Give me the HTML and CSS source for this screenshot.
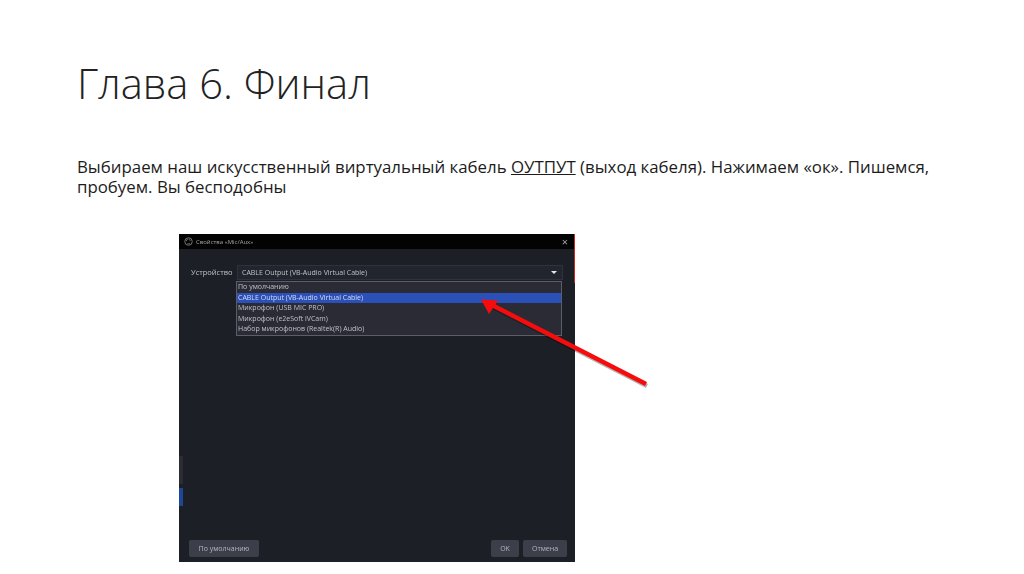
FILE: index.html
```html
<!DOCTYPE html>
<html lang="ru">
<head>
    <meta charset="UTF-8">
    <title>Глава 6. Финал</title>
    <link rel="stylesheet" href="styles.css">
</head>
<body>
    <div class="slide">
        <h1 class="slide-title">Глава 6. Финал</h1>
        <p class="slide-text">Выбираем наш искусственный виртуальный кабель <u>ОУТПУТ</u> (выход кабеля). Нажимаем «ок». Пишемся, пробуем. Вы бесподобны</p>

        <!-- Dialog screenshot -->
        <div class="dialog">
            <div class="dialog-bar">
                <svg class="bar-logo" viewBox="0 0 12 12" width="9" height="9">
                    <circle cx="6" cy="6" r="5" fill="none" stroke="#a5a5a5" stroke-width="0.9"/>
                    <path d="M6 2.5a2 2 0 0 1 1.8 3M8 8a2 2 0 0 1-3.6 0M3.2 5.6a2 2 0 0 1 2-2.4" fill="none" stroke="#a5a5a5" stroke-width="0.8"/>
                </svg>
                <span class="bar-title">Свойства «Mic/Aux»</span>
                <span class="bar-close">×</span>
            </div>
            <div class="dialog-body">
                <div class="device-row">
                    <span class="device-label">Устройство</span>
                    <div class="device-select">
                        <div class="combo">
                            <span>CABLE Output (VB-Audio Virtual Cable)</span>
                            <span class="combo-arrow"></span>
                        </div>
                        <div class="combo-list">
                            <div class="combo-item">По умолчанию</div>
                            <div class="combo-item selected">CABLE Output (VB-Audio Virtual Cable)</div>
                            <div class="combo-item">Микрофон (USB MIC PRO)</div>
                            <div class="combo-item">Микрофон (e2eSoft iVCam)</div>
                            <div class="combo-item">Набор микрофонов (Realtek(R) Audio)</div>
                        </div>
                    </div>
                </div>
                <div class="dialog-footer">
                    <div class="btn btn-default">По умолчанию</div>
                    <div class="footer-right">
                        <div class="btn btn-ok">OK</div>
                        <div class="btn btn-cancel">Отмена</div>
                    </div>
                </div>
            </div>
            <div class="edge-red"></div>
            <div class="edge-grey"></div>
            <div class="edge-blue"></div>
        </div>

        <!-- Red arrow over the screenshot -->
        <svg class="arrow" viewBox="0 0 1024 574" width="1024" height="574">
            <path d="M646 384 L490 304" stroke="#000" stroke-opacity="0.3" stroke-width="4.5" transform="translate(1 2)"/>
            <path d="M646 384 L490 304" stroke="#f50d0d" stroke-width="4.5"/>
            <path d="M481 299.500 L498 300.500 L489 314 Z" fill="#f50d0d"/>
        </svg>
    </div>
</body>
</html>
```

FILE: styles.css
```css
body {
    margin: 0;
    background: #fff;
    font-family: "Open Sans", "Noto Sans", sans-serif;
    color: #1c1c1c;
}

.slide {
    position: relative;
    width: 1024px;
    height: 574px;
    padding: 57px 0 0 77px;
    box-sizing: border-box;
    overflow: hidden;
}

/* Title and text */
.slide-title {
    margin: 0;
    font-size: 41.700px;
    line-height: 52px;
    font-weight: 300;
    color: #222;
}

.slide-text {
    margin: 48px 0 0;
    width: 870px;
    font-size: 16.840px;
    line-height: 20px;
}

/* Dialog screenshot */
.dialog {
    position: relative;
    display: flex;
    flex-direction: column;
    width: 396px;
    height: 328px;
    margin: 37px 0 0 102px;
    background: #1c1f26;
    color: #bfc1c7;
    font-size: 7px;
    filter: blur(0.5px);
}

.dialog-bar {
    display: flex;
    align-items: center;
    gap: 3px;
    height: 15px;
    flex-shrink: 0;
    padding: 0 7px 0 5px;
    background: #030303;
}

.bar-title {
    font-size: 6px;
    color: #a5a5a5;
}

.bar-close {
    margin-left: auto;
    font-size: 11px;
    line-height: 11px;
    color: #a8a8a8;
}

.dialog-body {
    display: flex;
    flex-direction: column;
    flex: 1;
    padding: 16px 8px 5px 10px;
}

.device-row {
    display: flex;
    gap: 5px;
    padding-left: 2px;
    flex: 1;
}

.device-label {
    width: 41px;
    line-height: 15px;
    white-space: nowrap;
    font-size: 7.500px;
}

.device-select {
    width: 326px;
}

.combo {
    display: flex;
    align-items: center;
    justify-content: space-between;
    height: 15px;
    padding: 0 5px 0 4px;
    box-sizing: border-box;
    background: #23252e;
    border: 1px solid #2e3240;
    font-size: 7px;
}

.combo-arrow {
    width: 0;
    height: 0;
    border-left: 3px solid transparent;
    border-right: 3px solid transparent;
    border-top: 3px solid #e8e8e8;
}

.combo-list {
    margin-top: 1px;
    margin-left: -1px;
    background: #2a2b35;
    border: 1px solid #5b5d69;
    height: 55px;
    box-sizing: border-box;
    width: 326px;
}

.combo-item {
    height: 10.600px;
    line-height: 10.600px;
    padding-left: 1px;
    font-size: 7px;
    white-space: nowrap;
}

.combo-item.selected {
    background: #2b50b8;
    color: #d5dcf2;
}

.dialog-footer {
    display: flex;
    justify-content: space-between;
}

.footer-right {
    display: flex;
    gap: 4px;
}

.btn {
    height: 17px;
    line-height: 17px;
    text-align: center;
    background: #3c3e4a;
    border-radius: 2px;
    color: #b5b7bd;
    font-size: 7px;
}

.btn-default {
    width: 70px;
}

.btn-ok {
    width: 28px;
}

.btn-cancel {
    width: 44px;
}

/* Leftovers at the edges of the screenshot */
.edge-red {
    position: absolute;
    top: 0;
    right: 0;
    width: 1px;
    height: 49px;
    background: #c8281e;
}

.edge-grey {
    position: absolute;
    left: 0;
    top: 222px;
    width: 4px;
    height: 28px;
    background: #2b2d33;
}

.edge-blue {
    position: absolute;
    left: 0;
    top: 254px;
    width: 4px;
    height: 18px;
    background: #1c4796;
}

.arrow {
    position: absolute;
    top: 0;
    left: 0;
    fill: none;
}
```
